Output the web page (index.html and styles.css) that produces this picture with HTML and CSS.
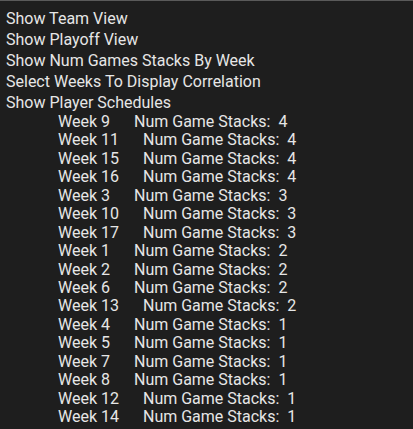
FILE: index.html
```html
<!DOCTYPE html>
<html lang="en">
<head>
    <meta charset="UTF-8">
    <meta name="viewport" content="width=device-width, initial-scale=1.0">
    <title>Stacks</title>
    <link rel="stylesheet" href="styles.css">
</head>
<body>
    <div class="menu">
        <div class="menu-item">Show Team View</div>
        <div class="menu-item">Show Playoff View</div>
        <div class="menu-item">Show Num Games Stacks By Week</div>
        <div class="menu-item">Select Weeks To Display Correlation</div>
        <div class="menu-item">Show Player Schedules</div>
    </div>
    <div class="weeks">
        <div class="week-row"><span class="week">Week 9</span><span class="stacks">Num Game Stacks:</span><span class="count">4</span></div>
        <div class="week-row"><span class="week">Week 11</span><span class="stacks">Num Game Stacks:</span><span class="count">4</span></div>
        <div class="week-row"><span class="week">Week 15</span><span class="stacks">Num Game Stacks:</span><span class="count">4</span></div>
        <div class="week-row"><span class="week">Week 16</span><span class="stacks">Num Game Stacks:</span><span class="count">4</span></div>
        <div class="week-row"><span class="week">Week 3</span><span class="stacks">Num Game Stacks:</span><span class="count">3</span></div>
        <div class="week-row"><span class="week">Week 10</span><span class="stacks">Num Game Stacks:</span><span class="count">3</span></div>
        <div class="week-row"><span class="week">Week 17</span><span class="stacks">Num Game Stacks:</span><span class="count">3</span></div>
        <div class="week-row"><span class="week">Week 1</span><span class="stacks">Num Game Stacks:</span><span class="count">2</span></div>
        <div class="week-row"><span class="week">Week 2</span><span class="stacks">Num Game Stacks:</span><span class="count">2</span></div>
        <div class="week-row"><span class="week">Week 6</span><span class="stacks">Num Game Stacks:</span><span class="count">2</span></div>
        <div class="week-row"><span class="week">Week 13</span><span class="stacks">Num Game Stacks:</span><span class="count">2</span></div>
        <div class="week-row"><span class="week">Week 4</span><span class="stacks">Num Game Stacks:</span><span class="count">1</span></div>
        <div class="week-row"><span class="week">Week 5</span><span class="stacks">Num Game Stacks:</span><span class="count">1</span></div>
        <div class="week-row"><span class="week">Week 7</span><span class="stacks">Num Game Stacks:</span><span class="count">1</span></div>
        <div class="week-row"><span class="week">Week 8</span><span class="stacks">Num Game Stacks:</span><span class="count">1</span></div>
        <div class="week-row"><span class="week">Week 12</span><span class="stacks">Num Game Stacks:</span><span class="count">1</span></div>
        <div class="week-row"><span class="week">Week 14</span><span class="stacks">Num Game Stacks:</span><span class="count">1</span></div>
    </div>
</body>
</html>
```

FILE: styles.css
```css
html {
    background-color: #1e1e1e;
}
body {
    margin: 0;
    padding: 7px 6px 0;
    border-top: 1px solid #5a5a5a;
    font-family: Roboto, "Liberation Sans", sans-serif;
    font-size: 16px;
    color: #e6e6e6;
    background-color: #1e1e1e;
}
.menu-item {
    line-height: 21px;
}
.weeks {
    padding-left: 52px;
}
.week-row {
    display: flex;
    line-height: 18.44px;
    white-space: nowrap;
}
.week {
    margin-right: 24px;
}
.count {
    margin-left: 8px;
}
```
